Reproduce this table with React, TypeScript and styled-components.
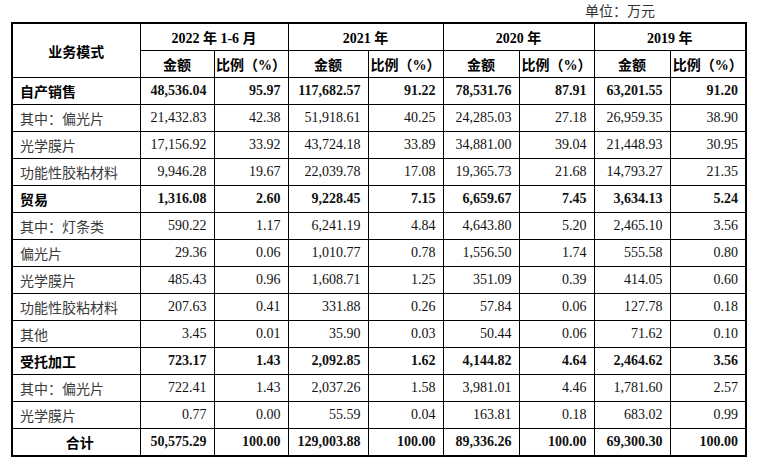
import React from "react";
import styled, { createGlobalStyle } from "styled-components";

const GlobalStyle = createGlobalStyle`
  html, body {
    margin: 0;
    padding: 0;
    background: #fff;
  }
  body {
    font-family: "Liberation Serif", "Noto Sans CJK SC", serif;
    color: #111;
  }
`;

const Page = styled.div`
  padding: 0 0 0 11px;
  width: 736px;
`;

const Unit = styled.div`
  height: 22px;
  line-height: 24px;
  font-size: 14px;
  color: #333;
  text-align: right;
  padding-right: 92px;
`;

const Table = styled.table`
  border-collapse: collapse;
  table-layout: fixed;
  width: 736px;
  border: 2px solid #000;
`;

const HeadCell = styled.th`
  border: 1px solid #000;
  height: 26px;
  padding: 0;
  font-size: 14px;
  font-weight: 700;
  text-align: center;
  vertical-align: middle;
  color: #000;
`;

const LabelCell = styled.td<{ $bold?: boolean; $center?: boolean }>`
  border: 1px solid #000;
  height: 26px;
  padding: 0 0 0 7px;
  font-size: 14px;
  font-weight: ${({ $bold }) => ($bold ? 700 : 400)};
  color: ${({ $bold }) => ($bold ? "#000" : "#3a3a3a")};
  text-align: ${({ $center }) => ($center ? "center" : "left")};
  white-space: nowrap;
`;

const NumCell = styled.td<{ $bold?: boolean }>`
  border: 1px solid #000;
  height: 26px;
  padding: 0 7px 0 0;
  font-size: 14px;
  font-weight: ${({ $bold }) => ($bold ? 700 : 400)};
  color: #111;
  text-align: right;
  white-space: nowrap;
`;

type Row = {
  label: string;
  kind?: "group" | "total";
  v: string[];
};

const years = ["2022 年 1-6 月", "2021 年", "2020 年", "2019 年"];
const widths = [128, 74, 74, 80, 75, 76, 75, 76, 76];

const rows: Row[] = [
  { label: "自产销售", kind: "group", v: ["48,536.04", "95.97", "117,682.57", "91.22", "78,531.76", "87.91", "63,201.55", "91.20"] },
  { label: "其中：偏光片", v: ["21,432.83", "42.38", "51,918.61", "40.25", "24,285.03", "27.18", "26,959.35", "38.90"] },
  { label: "光学膜片", v: ["17,156.92", "33.92", "43,724.18", "33.89", "34,881.00", "39.04", "21,448.93", "30.95"] },
  { label: "功能性胶粘材料", v: ["9,946.28", "19.67", "22,039.78", "17.08", "19,365.73", "21.68", "14,793.27", "21.35"] },
  { label: "贸易", kind: "group", v: ["1,316.08", "2.60", "9,228.45", "7.15", "6,659.67", "7.45", "3,634.13", "5.24"] },
  { label: "其中：灯条类", v: ["590.22", "1.17", "6,241.19", "4.84", "4,643.80", "5.20", "2,465.10", "3.56"] },
  { label: "偏光片", v: ["29.36", "0.06", "1,010.77", "0.78", "1,556.50", "1.74", "555.58", "0.80"] },
  { label: "光学膜片", v: ["485.43", "0.96", "1,608.71", "1.25", "351.09", "0.39", "414.05", "0.60"] },
  { label: "功能性胶粘材料", v: ["207.63", "0.41", "331.88", "0.26", "57.84", "0.06", "127.78", "0.18"] },
  { label: "其他", v: ["3.45", "0.01", "35.90", "0.03", "50.44", "0.06", "71.62", "0.10"] },
  { label: "受托加工", kind: "group", v: ["723.17", "1.43", "2,092.85", "1.62", "4,144.82", "4.64", "2,464.62", "3.56"] },
  { label: "其中：偏光片", v: ["722.41", "1.43", "2,037.26", "1.58", "3,981.01", "4.46", "1,781.60", "2.57"] },
  { label: "光学膜片", v: ["0.77", "0.00", "55.59", "0.04", "163.81", "0.18", "683.02", "0.99"] },
  { label: "合计", kind: "total", v: ["50,575.29", "100.00", "129,003.88", "100.00", "89,336.26", "100.00", "69,300.30", "100.00"] },
];

export default function App() {
  return (
    <>
      <GlobalStyle />
      <Page>
        <Unit>单位：万元</Unit>
        <Table>
          <colgroup>
            {widths.map((w, i) => (
              <col key={i} style={{ width: w }} />
            ))}
          </colgroup>
          <thead>
            <tr>
              <HeadCell rowSpan={2}>业务模式</HeadCell>
              {years.map((y) => (
                <HeadCell key={y} colSpan={2}>
                  {y}
                </HeadCell>
              ))}
            </tr>
            <tr>
              {years.map((y) => (
                <React.Fragment key={y}>
                  <HeadCell>金额</HeadCell>
                  <HeadCell>比例（%）</HeadCell>
                </React.Fragment>
              ))}
            </tr>
          </thead>
          <tbody>
            {rows.map((r, i) => {
              const bold = r.kind !== undefined;
              return (
                <tr key={i}>
                  <LabelCell $bold={bold} $center={r.kind === "total"}>
                    {r.label}
                  </LabelCell>
                  {r.v.map((n, j) => (
                    <NumCell key={j} $bold={bold}>
                      {n}
                    </NumCell>
                  ))}
                </tr>
              );
            })}
          </tbody>
        </Table>
      </Page>
    </>
  );
}
